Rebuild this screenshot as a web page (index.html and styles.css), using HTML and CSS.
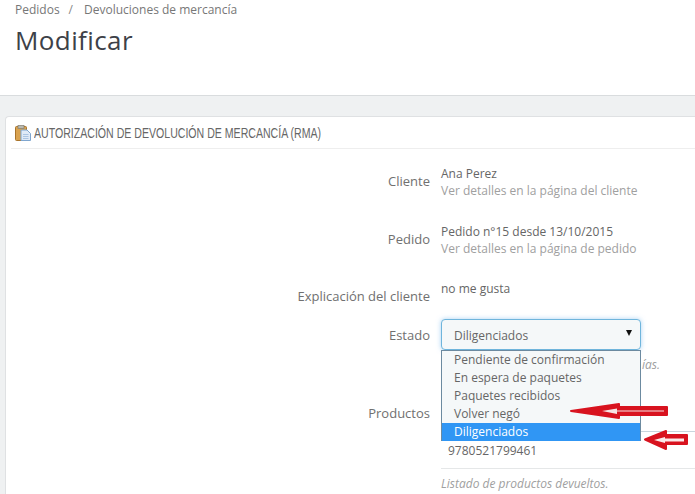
FILE: index.html
```html
<!DOCTYPE html>
<html lang="es">
<head>
<meta charset="utf-8">
<title>Modificar</title>
<link rel="stylesheet" href="styles.css">
</head>
<body>
<header class="page-head">
  <nav class="crumbs"><span>Pedidos</span><span class="sep">/</span><span>Devoluciones de mercancía</span></nav>
  <h1>Modificar</h1>
</header>
<main class="content">
  <section class="panel">
    <h2 class="panel-head">
      <svg class="panel-icon" width="16" height="16" viewBox="0 0 16 16"><rect x="0.5" y="1.500" width="11" height="14" rx="1" fill="#d9a24f" stroke="#a9742c"/><rect x="3" y="0.500" width="6" height="3" fill="#b8b8b0" stroke="#857f70" stroke-width="0.7"/><path d="M6 5h6l3.500 3.500v7h-9.500z" fill="#dfeaf7" stroke="#7fa6cf"/><path d="M8 9.500h5.500M8 11.500h5.500M8 13.500h5.500" stroke="#9dbbdc" stroke-width="0.8"/></svg>
      <span class="panel-title">AUTORIZACIÓN DE DEVOLUCIÓN DE MERCANCÍA (RMA)</span>
    </h2>
    <div class="form">
      <div class="row row-client">
        <label>Cliente</label>
        <div class="val"><div>Ana Perez</div><div class="link">Ver detalles en la página del cliente</div></div>
      </div>
      <div class="row row-order">
        <label>Pedido</label>
        <div class="val"><div>Pedido n°15 desde 13/10/2015</div><div class="link">Ver detalles en la página de pedido</div></div>
      </div>
      <div class="row row-expl">
        <label>Explicación del cliente</label>
        <div class="val">no me gusta</div>
      </div>
      <div class="row row-state">
        <label>Estado</label>
        <div class="val state-val">
          <div class="select"><span>Diligenciados</span><i class="caret"></i></div>
          <div class="hint hint-state">ías.</div>
          <ul class="dropdown">
            <li>Pendiente de confirmación</li>
            <li>En espera de paquetes</li>
            <li>Paquetes recibidos</li>
            <li>Volver negó</li>
            <li class="active">Diligenciados</li>
          </ul>
        </div>
      </div>
      <div class="row row-products">
        <label>Productos</label>
        <div class="val products-val">
          <div class="product">9780521799461</div>
          <div class="hint">Listado de productos devueltos.</div>
        </div>
      </div>
    </div>
  </section>
</main>
<svg class="arrows" width="695" height="494" viewBox="0 0 695 494">
  <path d="M571 411 L619 404 L619 407 L667 407 L667 415 L619 415 L619 418 Z" fill="#d8131f" stroke="#d8131f" stroke-width="2" stroke-linejoin="round"/>
  <path d="M602 411 L617 408.500 L617 410.500 L664 410.500 L664 411.500 L617 411.500 L617 414 Z" fill="#f6e4e4"/>
  <path d="M645 439.500 L666 431 L666 435 L687 435 L687 444 L666 444 L666 449 Z" fill="#d8131f" stroke="#d8131f" stroke-width="2" stroke-linejoin="round"/>
  <path d="M654 440 L665 437 L665 438.500 L684 438.500 L684 441.500 L665 441.500 L665 443 Z" fill="#fbeaea"/>
</svg>
</body>
</html>
```
FILE: styles.css
```css
* { box-sizing: border-box; }
html, body { margin: 0; height: 494px; overflow: hidden; }
body {
  position: relative;
  background: #eff1f2;
  font-family: "Open Sans", sans-serif;
  font-size: 12px;
  color: #666;
}
.page-head {
  height: 96px;
  background: #fff;
  border-bottom: 1px solid #d9dcde;
  padding: 1px 15px 0;
}
.crumbs { font-size: 12px; line-height: 17px; color: #777; display: flex; }
.sep { margin: 0 11px 0 9px; color: #888; }
h1 {
  margin: 6px 0 0;
  font-size: 26px;
  line-height: 32px;
  font-weight: 400;
  color: #3d4148;
  letter-spacing: 0.4px;
}
.content { padding: 20px 0 0 5px; }
.panel {
  background: #fff;
  border: 1px solid #dfe1e3;
  border-right: 0;
  border-bottom: 0;
  border-radius: 4px 0 0 0;
  height: 378px;
  padding: 0 0 0 5px;
}
.panel-head {
  margin: 0;
  height: 32px;
  border-bottom: 1px solid #eee;
  display: flex;
  align-items: center;
  gap: 3px;
  padding-left: 4px;
  font-family: "Liberation Sans", sans-serif;
  font-size: 15px;
  font-weight: 400;
  color: #666;
}
.panel-icon { flex: none; }
.panel-title { display: inline-block; white-space: nowrap; transform: scaleX(0.705); transform-origin: left center; }
.form { display: flex; flex-direction: column; }
.row { display: grid; grid-template-columns: 419px 1fr; column-gap: 11px; }
.row label { text-align: right; font-size: 13px; color: #707070; line-height: 18px; }
.val { line-height: 17px; color: #666; font-size: 12px; }
.link { color: #a0a0a0; font-size: 12px; }
.row-client { margin-top: 16px; height: 58px; }
.row-client label { padding-top: 7px; }
.row-order { height: 57px; }
.row-order label { padding-top: 7px; }
.row-expl { height: 31px; }
.row-expl label { padding-top: 7px; }
.row-state { height: 83px; margin-top: 8px; }
.row-state label { padding-top: 7px; }
.state-val { position: relative; }
.select {
  width: 200px;
  height: 31px;
  border: 1px solid #6fb5dc;
  border-radius: 4px;
  background: #f5f8f9;
  box-shadow: 0 0 5px rgba(102, 175, 233, .55);
  padding-left: 12px;
  display: flex;
  align-items: center;
  justify-content: space-between;
  padding-right: 8px;
  padding-top: 1px;
}
.caret {
  width: 0; height: 0;
  margin-bottom: 4px;
  border-left: 3px solid transparent;
  border-right: 3px solid transparent;
  border-top: 6px solid #111;
}
.hint { font-style: italic; color: #a0a0a0; font-size: 12px; }
.hint-state { margin: 6px 0 0 201px; white-space: nowrap; }
.dropdown {
  position: absolute;
  left: 0; top: 31px;
  width: 200px;
  margin: 0;
  padding: 0;
  list-style: none;
  background: #f5f8f9;
  border: 1px solid #6c8aa0;
  border-bottom: 0;
}
.dropdown li { height: 18px; line-height: 18px; padding-left: 12px; color: #666; }
.dropdown .active { background: #3096f4; color: #fff; }
.row-products { height: 90px; }
.row-products label { padding-top: 2px; }
.products-val { padding-top: 29px; }
.product {
  border-top: 1px solid #c9d5dd;
  border-bottom: 1px solid #e5e7e8;
  height: 38px;
  padding: 10px 0 0 7px;
  margin-bottom: 6px;
  font-size: 12px;
}
.arrows { position: absolute; left: 0; top: 0; pointer-events: none; }
```
